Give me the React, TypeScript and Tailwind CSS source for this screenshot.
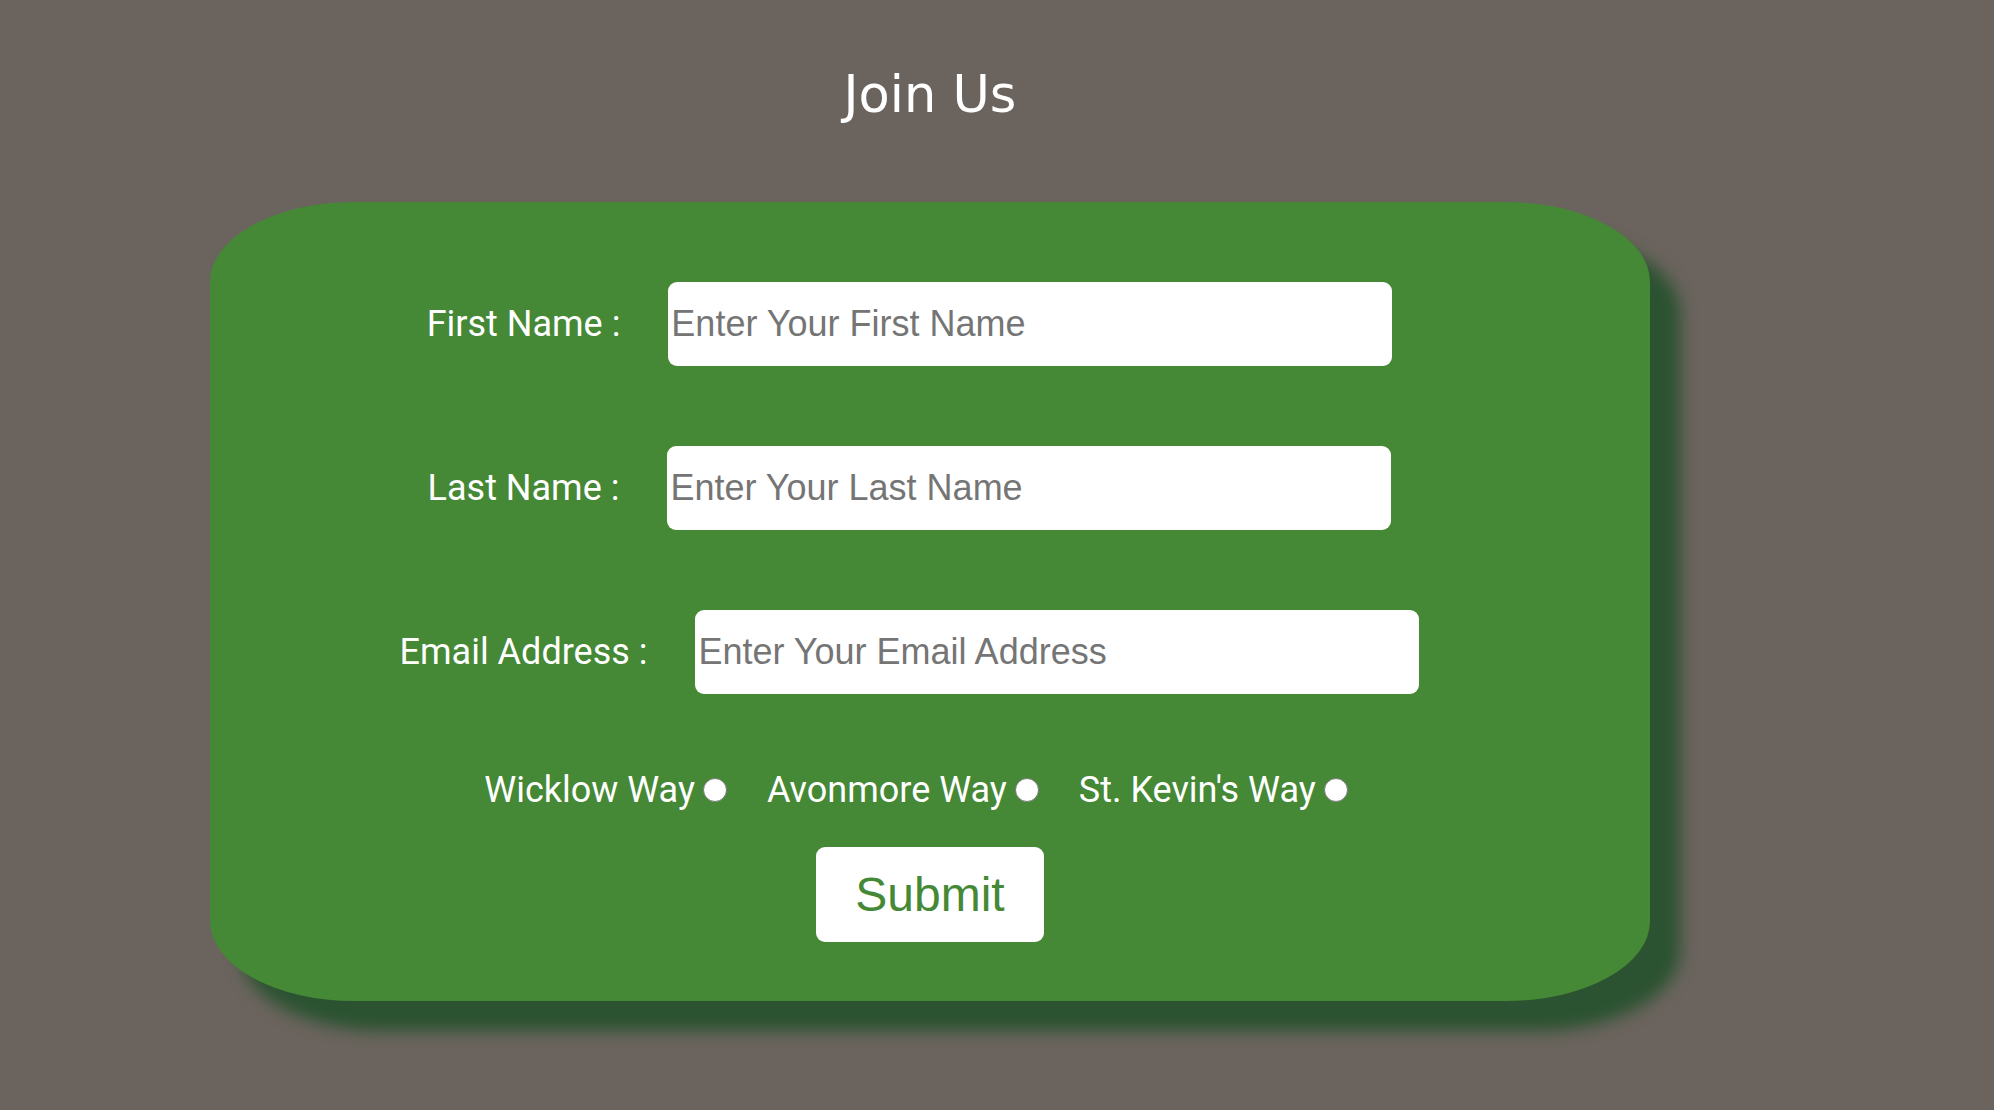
import React from 'react';

const fields = [
  { label: 'First Name :', placeholder: 'Enter Your First Name' },
  { label: 'Last Name :', placeholder: 'Enter Your Last Name' },
  { label: 'Email Address :', placeholder: 'Enter Your Email Address' },
];

const routes = ['Wicklow Way', 'Avonmore Way', "St. Kevin's Way"];

function Field({ label, placeholder }: { label: string; placeholder: string }) {
  return (
    <div className="flex items-center justify-center gap-[48px] pr-[41px]">
      <label className="text-[36px] text-white whitespace-nowrap">{label}</label>
      <input
        type="text"
        placeholder={placeholder}
        className="w-[724px] h-[84px] rounded-[9px] bg-white px-[3px] text-[36px] text-black outline-none placeholder:text-[#757575] font-['Liberation_Sans',Arial,sans-serif]"
      />
    </div>
  );
}

export default function App() {
  return (
    <div className="min-h-screen bg-[#6b645e] pt-[69px] pb-[60px] font-['Roboto',sans-serif]">
      <h1 className="w-[1860px] text-center text-[51px] leading-[51px] text-white font-['DejaVu_Sans',sans-serif] font-normal">
        Join Us
      </h1>

      <form
        className="mt-[82px] ml-[210px] w-[1440px] h-[799px] rounded-[10%] bg-[#458835] pt-[80px] shadow-[30px_30px_16px_#2b5331]"
        onSubmit={(e) => e.preventDefault()}
      >
        <div className="flex flex-col gap-[80px]">
          {fields.map((f) => (
            <Field key={f.label} {...f} />
          ))}
        </div>

        <div className="mt-[69px] flex items-center justify-center gap-[40px] pr-[28px]">
          {routes.map((r) => (
            <label key={r} className="flex items-center gap-[8px] text-[36px] text-white whitespace-nowrap">
              {r}
              <span className="inline-block w-[24px] h-[24px] rounded-full bg-white border-[1.5px] border-[#7a7a7a]" />
            </label>
          ))}
        </div>

        <div className="mt-[30px] flex justify-center">
          <button
            type="submit"
            className="w-[228px] h-[95px] rounded-[9px] bg-white text-[48px] text-[#458835] font-['Liberation_Sans',Arial,sans-serif]"
          >
            Submit
          </button>
        </div>
      </form>
    </div>
  );
}
